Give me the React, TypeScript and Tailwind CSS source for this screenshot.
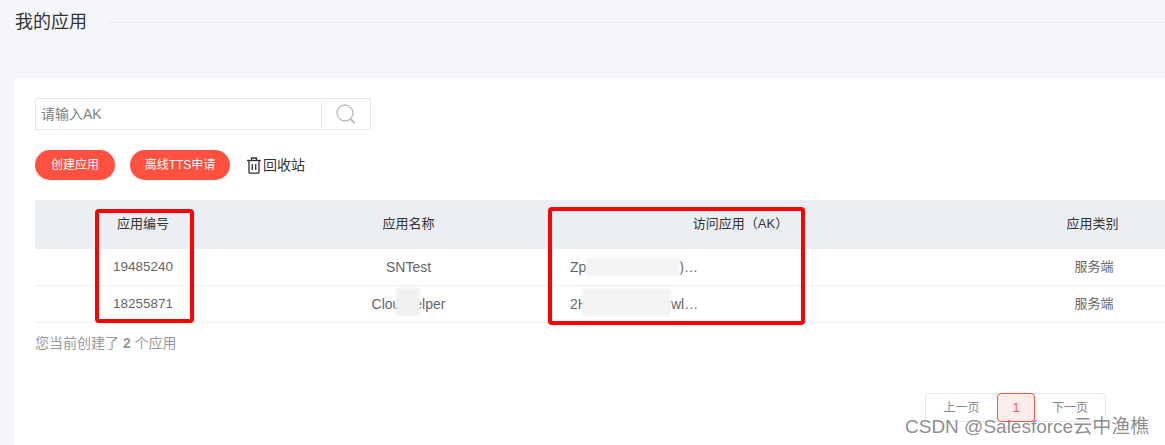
import React from "react";

const font = { fontFamily: '"Liberation Sans", "Noto Sans CJK SC", sans-serif' };

const rows = [
  { id: "19485240", name: "SNTest", ak: "Zp", gap: "w-[93px]", tail: ")…", type: "服务端" },
  { id: "18255871", name: "Clou", nameTail: "elper", ak: "2H", gap: "w-[76px]", tail: "xwl…", type: "服务端" },
];

function SearchIcon() {
  return (
    <svg width="22" height="22" viewBox="0 0 22 22" fill="none" stroke="#b8bcc2" strokeWidth="1.3">
      <circle cx="10" cy="10" r="8" />
      <path d="M15.5 16l3.5 3.5" strokeWidth="1.8" strokeLinecap="round" />
    </svg>
  );
}

function TrashIcon() {
  return (
    <svg width="14" height="17" viewBox="0 0 14 17" fill="none" stroke="#333" strokeWidth="1.3">
      <path d="M0 3.5h14" />
      <path d="M4.5 3.5V1h5v2.5" />
      <path d="M2 3.5V15.5a.7.7 0 0 0 .7.7h8.6a.7.7 0 0 0 .7-.7V3.5" />
      <path d="M5.3 7v6M8.7 7v6" />
    </svg>
  );
}

export default function App() {
  return (
    <div className="relative h-[445px] w-[1165px] overflow-hidden bg-[#f5f6fa]" style={font}>
      {/* Page title */}
      <div className="flex h-[78px] items-start pl-[15px] pt-[10px]">
        <h1 className="text-lg leading-6 text-[#333]">我的应用</h1>
        <div className="ml-[21px] mt-[12px] h-px flex-1 bg-[#e8eaed]" />
      </div>

      {/* Card */}
      <div className="ml-[15px] h-[367px] bg-white pl-5 pt-5">
        <div className="flex h-8 w-[336px] border border-[#e3e7ec]">
          <div className="flex-1 pl-[5px] text-sm leading-[30px] text-[#808080]">请输入AK</div>
          <div className="my-px flex w-[49px] items-center justify-center border-l border-[#e3e7ec]">
            <SearchIcon />
          </div>
        </div>

        <div className="mt-5 flex h-[30px] items-center">
          <button className="h-[30px] w-20 rounded-full bg-[#ff5040] text-xs text-white">创建应用</button>
          <button className="ml-[15px] h-[30px] w-[100px] rounded-full bg-[#ff5040] text-xs text-white">离线TTS申请</button>
          <span className="ml-[17px] flex items-center gap-[2px] text-sm text-[#333]">
            <TrashIcon />
            回收站
          </span>
        </div>

        {/* Table */}
        <div className="mt-5 w-[1239px] text-[13px] text-[#666]">
          <div className="grid h-[49px] grid-cols-[216px_315px_344px_364px] bg-[#ebeef3] pt-[16px] text-center leading-[16px] text-[#333]">
            <div>应用编号</div>
            <div>应用名称</div>
            <div className="pl-[5px]">访问应用（AK）</div>
            <div className="pl-[1px]">应用类别</div>
          </div>
          {rows.map((row) => (
            <div
              key={row.id}
              className="grid h-[37px] grid-cols-[216px_315px_344px_364px] items-center border-b border-[#eeeff2] text-center"
            >
              <div className="text-[13.5px]">{row.id}</div>
              <div className="text-sm">
                {row.name}
                {row.nameTail && (
                  <>
                    <span className="inline-block w-[14px]" />
                    {row.nameTail}
                  </>
                )}
              </div>
              <div className="pl-[4px] text-left text-sm">
                {row.ak}
                <span className={`inline-block ${row.gap}`} />
                {row.tail}
              </div>
              <div className="pl-[4px]">{row.type}</div>
            </div>
          ))}
          <div className="mt-3 text-sm leading-[16px] text-[#999]">
            您当前创建了 <b>2</b> 个应用
          </div>
        </div>
      </div>

      {/* Pagination */}
      <div className="absolute left-[925px] top-[393px] flex h-[29px] w-[181px] items-stretch rounded-sm border border-[#e8e8e8] text-xs text-[#888]">
        <div className="flex w-[71px] items-center justify-center">上一页</div>
        <div className="-my-px flex w-[38px] items-center justify-center rounded-sm border border-[#ff5040] bg-[#fdeeec] text-[#ff5040]">1</div>
        <div className="flex flex-1 items-center justify-center">下一页</div>
      </div>

      {/* Redaction patches pasted over the screenshot */}
      <div className="absolute left-[396px] top-[288px] h-7 w-6 bg-[#f0f0f0] blur-[1px]" />
      <div className="absolute left-[586px] top-[258px] h-[18px] w-[94px] bg-[#f3f3f3] blur-[1px]" />
      <div className="absolute left-[582px] top-[289px] h-[27px] w-[89px] bg-[#f3f3f3] blur-[1px]" />

      {/* Red annotation boxes */}
      <div className="absolute left-[95px] top-[209px] h-[114px] w-[99px] rounded-sm border-4 border-[#ff0000]" />
      <div className="absolute left-[548px] top-[207px] h-[118px] w-[257px] rounded-sm border-4 border-[#ff0000]" />

      {/* Watermark */}
      <div className="absolute left-[905px] top-[415px] text-[19px] leading-6 text-[#808080]/90">CSDN @Salesforce云中渔樵</div>
    </div>
  );
}
